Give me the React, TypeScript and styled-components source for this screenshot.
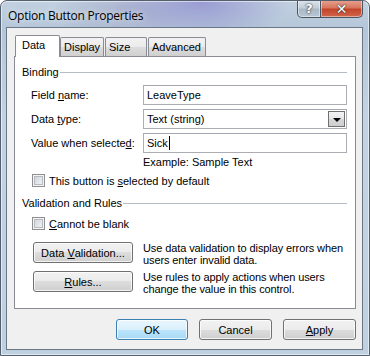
import { FC, ReactNode } from 'react';
import styled, { createGlobalStyle } from 'styled-components';

const GlobalStyle = createGlobalStyle`
  html, body {
    margin: 0;
    padding: 0;
    background: #ffffff;
  }
  body {
    font-family: "Liberation Sans", Arial, sans-serif;
    font-size: 11px;
    color: #000;
  }
`;

const Window = styled.div`
  width: 370px;
  height: 356px;
  box-sizing: border-box;
  display: flex;
  flex-direction: column;
  border: 1px solid #55606e;
  border-radius: 7px 7px 0 0;
  background:
    radial-gradient(ellipse 90px 40px at 200px 0px, rgba(120, 110, 200, 0.55), transparent),
    radial-gradient(ellipse 70px 30px at 120px 10px, rgba(150, 150, 190, 0.45), transparent),
    linear-gradient(180deg, #c2d1e0 0px, #b4c6d9 28px, #c3d3e3 120px, #bfd0e1 100%);
  box-shadow: inset 0 0 0 1px rgba(255, 255, 255, 0.55);
  overflow: hidden;
`;

const TitleBar = styled.div`
  height: 26px;
  display: flex;
  align-items: flex-start;
  padding-left: 7px;
`;

const Title = styled.div`
  flex: 1;
  margin-top: 6px;
  font-family: "Open Sans", "Liberation Sans", sans-serif;
  font-size: 12px;
  letter-spacing: -0.25px;
  color: #000;
  text-shadow: 0 0 6px rgba(255, 255, 255, 0.9);
`;

const CaptionButtons = styled.div`
  display: flex;
  margin-right: 6px;
  margin-top: -1px;
`;

const CaptionButton = styled.div<{ $close?: boolean }>`
  width: ${(p) => (p.$close ? 42 : 24)}px;
  height: 18px;
  box-sizing: border-box;
  display: flex;
  align-items: center;
  justify-content: center;
  border: 1px solid #4a5562;
  border-top: none;
  border-left: ${(p) => (p.$close ? 'none' : '1px solid #4a5562')};
  border-radius: ${(p) => (p.$close ? '0 0 5px 0' : '0 0 0 5px')};
  background: ${(p) =>
    p.$close
      ? 'linear-gradient(180deg, #e8a493 0%, #d7775f 45%, #c3452a 55%, #d0674c 100%)'
      : 'linear-gradient(180deg, #dfe6ee 0%, #c3ced9 45%, #aab8c7 55%, #b9c6d3 100%)'};
  box-shadow: inset 0 0 0 1px rgba(255, 255, 255, 0.45);
  color: #fff;
  font-family: "DejaVu Sans", sans-serif;
  font-weight: bold;
  font-size: ${(p) => (p.$close ? 14 : 13)}px;
  text-shadow: 0 0 2px #333, 0 0 1px #222;
`;

const Client = styled.div`
  flex: 1;
  margin: 0 6px 5px 5px;
  border: 1px solid #6b7785;
  background: #f0f0f0;
  display: flex;
  flex-direction: column;
  padding: 7px 6px 9px 7px;
`;

const TabStrip = styled.div`
  display: flex;
  align-items: flex-end;
  height: 21px;
  padding-left: 1px;
  gap: 1px;
`;

const Tab = styled.div<{ $active?: boolean; $w: number }>`
  width: ${(p) => p.$w}px;
  box-sizing: border-box;
  height: ${(p) => (p.$active ? 22 : 19)}px;
  margin-bottom: ${(p) => (p.$active ? -1 : 0)}px;
  margin-right: ${(p) => (p.$active ? -1 : 0)}px;
  position: relative;
  z-index: ${(p) => (p.$active ? 1 : 0)};
  border: 1px solid #898c95;
  border-bottom: none;
  border-radius: 2px 2px 0 0;
  background: ${(p) =>
    p.$active ? '#ffffff' : 'linear-gradient(180deg, #f2f2f2 0%, #ebebeb 50%, #dddddd 50%, #cfcfcf 100%)'};
  padding-left: ${(p) => (p.$active ? 6 : 3)}px;
  line-height: 18px;
  white-space: nowrap;
`;

const Panel = styled.div`
  height: 253px;
  box-sizing: border-box;
  background: #fff;
  border: 1px solid #898c95;
  padding: 8px 8px 0 7px;
  display: flex;
  flex-direction: column;
`;

const GroupHeader = styled.div<{ $top?: number }>`
  display: flex;
  align-items: center;
  height: 14px;
  margin-top: ${(p) => p.$top ?? 0}px;
  white-space: nowrap;
  &::after {
    content: '';
    flex: 1;
    height: 1px;
    background: #b6bcc6;
    margin-left: 1px;
    margin-top: 1px;
  }
`;

const FieldGrid = styled.div`
  display: grid;
  grid-template-columns: 112px 204px;
  grid-auto-rows: 20px;
  row-gap: 4px;
  margin-top: 6px;
  padding-left: 9px;
`;

const Label = styled.div`
  display: flex;
  align-items: center;
  white-space: nowrap;
`;

const TextBox = styled.div`
  box-sizing: border-box;
  border: 1px solid #abadb3;
  border-top-color: #a4a6ad;
  display: flex;
  align-items: center;
  padding-left: 3px;
  background: #fff;
`;

const DropButton = styled.div`
  margin-left: auto;
  margin-right: 1px;
  width: 17px;
  height: 16px;
  box-sizing: border-box;
  border: 1px solid #707070;
  background: linear-gradient(180deg, #f3f3f3 0%, #e6e6e6 50%, #d7d7d7 50%, #cfcfcf 100%);
  display: flex;
  align-items: center;
  justify-content: center;
  &::before {
    content: '';
    margin-top: 2px;
    border-left: 4px solid transparent;
    border-right: 4px solid transparent;
    border-top: 4px solid #000;
  }
`;

const Caret = styled.span`
  display: inline-block;
  width: 1px;
  height: 14px;
  background: #000;
  margin-left: 1px;
`;

const Hint = styled.div`
  margin-top: 3px;
  margin-left: 121px;
  height: 13px;
  line-height: 13px;
`;

const CheckRow = styled.label<{ $top: number }>`
  display: flex;
  align-items: center;
  gap: 4px;
  height: 13px;
  margin-top: ${(p) => p.$top}px;
  padding-left: 10px;
  white-space: nowrap;
`;

const CheckBox = styled.span`
  width: 13px;
  height: 13px;
  box-sizing: border-box;
  border: 1px solid #8f8f8f;
  background: linear-gradient(135deg, #c9cdd3 0%, #e4e6e9 55%, #f7f7f7 100%);
  box-shadow: inset 0 0 0 1px #f4f4f4, inset 0 0 0 2px #b5bac1;
`;

const ActionRow = styled.div<{ $top: number }>`
  display: flex;
  align-items: flex-start;
  margin-top: ${(p) => p.$top}px;
  padding-left: 11px;
`;

const Button = styled.div<{ $w: number; $default?: boolean }>`
  width: ${(p) => p.$w}px;
  height: 21px;
  box-sizing: border-box;
  border: 1px solid ${(p) => (p.$default ? '#3c7fb1' : '#707070')};
  border-radius: 3px;
  background: ${(p) =>
    p.$default
      ? 'linear-gradient(180deg, #eaf6fd 0%, #d9f0fc 50%, #bee6fd 50%, #a7d9f5 100%)'
      : 'linear-gradient(180deg, #f2f2f2 0%, #ebebeb 50%, #dddddd 50%, #cfcfcf 100%)'};
  box-shadow: inset 0 0 0 1px rgba(255, 255, 255, 0.75);
  display: flex;
  align-items: center;
  justify-content: center;
  white-space: nowrap;
  flex-shrink: 0;
`;

const Description = styled.div`
  margin-left: 10px;
  line-height: 12px;
  white-space: nowrap;
  letter-spacing: -0.1px;
`;

const Footer = styled.div`
  margin-top: 10px;
  display: flex;
  justify-content: flex-end;
  gap: 11px;
`;

const Key = styled.span`
  text-decoration: underline;
  text-underline-offset: 1px;
`;

interface CheckProps {
  top: number;
  children: ReactNode;
}

const Check: FC<CheckProps> = ({ top, children }) => (
  <CheckRow $top={top}>
    <CheckBox />
    <span>{children}</span>
  </CheckRow>
);

const App: FC = () => {
  return (
    <>
      <GlobalStyle />
      <Window>
        <TitleBar>
          <Title>Option Button Properties</Title>
          <CaptionButtons>
            <CaptionButton>?</CaptionButton>
            <CaptionButton $close>✕</CaptionButton>
          </CaptionButtons>
        </TitleBar>
        <Client>
          <TabStrip>
            <Tab $active $w={45}>Data</Tab>
            <Tab $w={44}>Display</Tab>
            <Tab $w={42}>Size</Tab>
            <Tab $w={58}>Advanced</Tab>
          </TabStrip>
          <Panel>
            <GroupHeader>Binding</GroupHeader>
            <FieldGrid>
              <Label>
                Field&nbsp;<Key>n</Key>ame:
              </Label>
              <TextBox>LeaveType</TextBox>
              <Label>
                Data&nbsp;<Key>t</Key>ype:
              </Label>
              <TextBox>
                Text (string)
                <DropButton />
              </TextBox>
              <Label>
                Value when selecte<Key>d</Key>:
              </Label>
              <TextBox>
                Sick
                <Caret />
              </TextBox>
            </FieldGrid>
            <Hint>Example: Sample Text</Hint>
            <Check top={5}>
              This button is <Key>s</Key>elected by default
            </Check>
            <GroupHeader $top={9}>Validation and Rules</GroupHeader>
            <Check top={7}>
              <Key>C</Key>annot be blank
            </Check>
            <ActionRow $top={12}>
              <Button $w={100}>
                Data&nbsp;<Key>V</Key>alidation...
              </Button>
              <Description>
                Use data validation to display errors when
                <br />
                users enter invalid data.
              </Description>
            </ActionRow>
            <ActionRow $top={5}>
              <Button $w={100}>
                <Key>R</Key>ules...
              </Button>
              <Description>
                Use rules to apply actions when users
                <br />
                change the value in this control.
              </Description>
            </ActionRow>
          </Panel>
          <Footer>
            <Button $w={72} $default>
              OK
            </Button>
            <Button $w={73}>Cancel</Button>
            <Button $w={73}>
              <Key>A</Key>pply
            </Button>
          </Footer>
        </Client>
      </Window>
    </>
  );
};

export default App;
